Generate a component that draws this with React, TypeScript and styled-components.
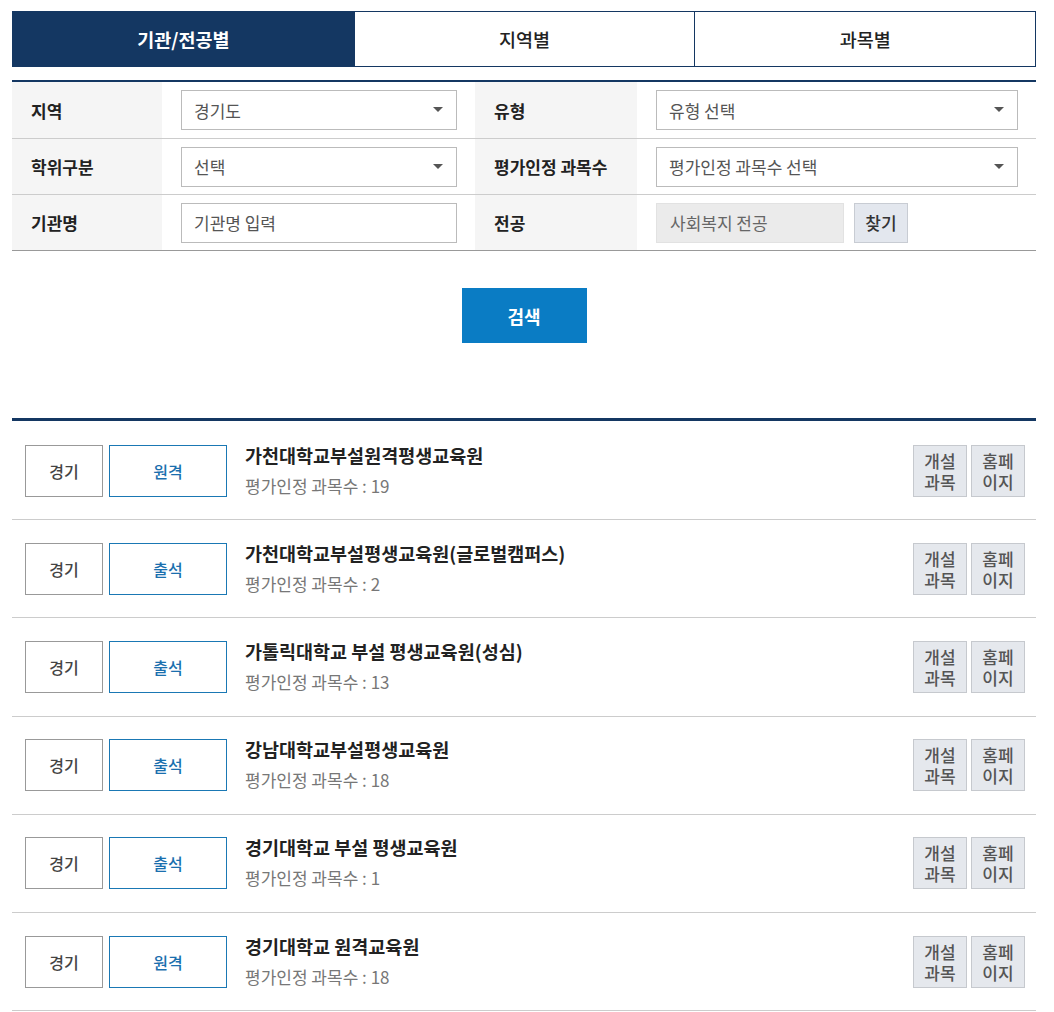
import styled, { createGlobalStyle } from "styled-components";

const GlobalStyle = createGlobalStyle`
  body {
    margin: 0;
    background: #fff;
    font-family: "Noto Sans CJK KR", "Noto Sans", sans-serif;
    color: #222;
  }
  * { box-sizing: border-box; }
`;

const tabs = ["기관/전공별", "지역별", "과목별"];

const items = [
  { area: "경기", type: "원격", name: "가천대학교부설원격평생교육원", count: 19 },
  { area: "경기", type: "출석", name: "가천대학교부설평생교육원(글로벌캠퍼스)", count: 2 },
  { area: "경기", type: "출석", name: "가톨릭대학교 부설 평생교육원(성심)", count: 13 },
  { area: "경기", type: "출석", name: "강남대학교부설평생교육원", count: 18 },
  { area: "경기", type: "출석", name: "경기대학교 부설 평생교육원", count: 1 },
  { area: "경기", type: "원격", name: "경기대학교 원격교육원", count: 18 },
];

function Caret() {
  return (
    <svg width="10" height="6" viewBox="0 0 10 6">
      <path d="M0 0 L10 0 L5 5 Z" fill="#555" />
    </svg>
  );
}

function App() {
  return (
    <>
      <GlobalStyle />
      <Page>
        <Tabs>
          {tabs.map((t, i) => (
            <Tab key={t} $active={i === 0}>
              {t}
            </Tab>
          ))}
        </Tabs>

        <Form>
          <Row>
            <Label>지역</Label>
            <Cell>
              <Select>
                <span>경기도</span>
                <Caret />
              </Select>
            </Cell>
            <Label>유형</Label>
            <Cell>
              <Select>
                <span>유형 선택</span>
                <Caret />
              </Select>
            </Cell>
          </Row>
          <Row>
            <Label>학위구분</Label>
            <Cell>
              <Select>
                <span>선택</span>
                <Caret />
              </Select>
            </Cell>
            <Label>평가인정 과목수</Label>
            <Cell>
              <Select>
                <span>평가인정 과목수 선택</span>
                <Caret />
              </Select>
            </Cell>
          </Row>
          <Row>
            <Label>기관명</Label>
            <Cell>
              <Select>
                <span>기관명 입력</span>
              </Select>
            </Cell>
            <Label>전공</Label>
            <Cell>
              <MajorBox>사회복지 전공</MajorBox>
              <FindButton>찾기</FindButton>
            </Cell>
          </Row>
        </Form>

        <SearchWrap>
          <SearchButton>검색</SearchButton>
        </SearchWrap>

        <List>
          {items.map((it) => (
            <Item key={it.name}>
              <Badge>{it.area}</Badge>
              <Badge $blue>{it.type}</Badge>
              <Info>
                <Title>{it.name}</Title>
                <Sub>평가인정 과목수 : {it.count}</Sub>
              </Info>
              <Actions>
                <SmallButton>
                  <span>개설</span>
                  <span>과목</span>
                </SmallButton>
                <SmallButton>
                  <span>홈페</span>
                  <span>이지</span>
                </SmallButton>
              </Actions>
            </Item>
          ))}
        </List>
      </Page>
    </>
  );
}

const Page = styled.div`
  padding: 11px 18px 0 12px;
  width: 1054px;
`;

const Tabs = styled.div`
  display: grid;
  grid-template-columns: repeat(3, 1fr);
  height: 56px;
  border: 1px solid #143762;
`;

const Tab = styled.div<{ $active?: boolean }>`
  display: flex;
  align-items: center;
  justify-content: center;
  font-size: 18.5px;
  font-weight: ${(p) => (p.$active ? 700 : 500)};
  color: ${(p) => (p.$active ? "#fff" : "#222")};
  background: ${(p) => (p.$active ? "#143762" : "#fff")};
  & + & {
    border-left: 1px solid #143762;
  }
`;

const Form = styled.div`
  margin-top: 13px;
  border-top: 2px solid #143762;
  border-bottom: 1px solid #999;
`;

const Row = styled.div`
  display: grid;
  grid-template-columns: 150px 313px 162px 1fr;
  height: 56px;
  & + & {
    border-top: 1px solid #ccc;
  }
`;

const Label = styled.div`
  display: flex;
  align-items: center;
  padding-left: 19px;
  background: #f5f5f5;
  font-size: 17px;
  font-weight: 700;
  color: #222;
  white-space: nowrap;
`;

const Cell = styled.div`
  display: flex;
  align-items: center;
  gap: 10px;
  padding: 0 18px 0 19px;
`;

const Select = styled.div`
  flex: 1;
  height: 40px;
  display: flex;
  align-items: center;
  justify-content: space-between;
  padding: 0 13px 0 12px;
  border: 1px solid #bbb;
  background: #fff;
  font-size: 17px;
  color: #555;
`;

const MajorBox = styled.div`
  width: 188px;
  height: 40px;
  display: flex;
  align-items: center;
  padding-left: 13px;
  background: #ebebeb;
  border: 1px solid #e2e2e2;
  font-size: 17px;
  color: #666;
`;

const FindButton = styled.div`
  width: 54px;
  height: 40px;
  display: flex;
  align-items: center;
  justify-content: center;
  background: #e3e7ee;
  border: 1px solid #c8ccd3;
  font-size: 17px;
  font-weight: 500;
  color: #333;
`;

const SearchWrap = styled.div`
  display: flex;
  justify-content: center;
  padding: 37px 0 75px;
`;

const SearchButton = styled.div`
  width: 125px;
  height: 55px;
  display: flex;
  align-items: center;
  justify-content: center;
  background: #0a7cc4;
  color: #fff;
  font-size: 18px;
  font-weight: 700;
`;

const List = styled.div`
  border-top: 3px solid #143762;
  padding-top: 1px;
`;

const Item = styled.div`
  display: flex;
  align-items: center;
  height: 98.2px;
  padding: 0 11px 0 13px;
  border-bottom: 1px solid #ccc;
`;

const Badge = styled.div<{ $blue?: boolean }>`
  width: ${(p) => (p.$blue ? "118px" : "78px")};
  height: 52px;
  margin-right: 6px;
  display: flex;
  align-items: center;
  justify-content: center;
  border: 1px solid ${(p) => (p.$blue ? "#1a78b4" : "#999")};
  color: ${(p) => (p.$blue ? "#1a6fae" : "#444")};
  font-size: 16px;
  font-weight: 500;
`;

const Info = styled.div`
  flex: 1;
  display: flex;
  flex-direction: column;
  gap: 5px;
  padding-left: 12px;
  margin-top: -2px;
`;

const Title = styled.div`
  font-size: 18.5px;
  font-weight: 600;
  color: #222;
`;

const Sub = styled.div`
  font-size: 17px;
  color: #777;
`;

const Actions = styled.div`
  display: flex;
  gap: 4px;
`;

const SmallButton = styled.div`
  width: 54px;
  height: 52px;
  display: flex;
  flex-direction: column;
  align-items: center;
  justify-content: center;
  line-height: 21px;
  background: #e5e8ed;
  border: 1px solid #c6c9ce;
  font-size: 17px;
  font-weight: 500;
  color: #555;
`;

export default App;
